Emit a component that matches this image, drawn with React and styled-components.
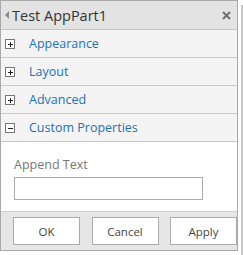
import React from "react";
import styled, { createGlobalStyle } from "styled-components";

const GlobalStyle = createGlobalStyle`
  body {
    margin: 0;
    background: #fff;
    font-family: "Open Sans", "Noto Sans", sans-serif;
  }
`;

const Page = styled.div`
  display: flex;
  width: 243px;
  height: 255px;
`;

const Panel = styled.div`
  width: 237px;
  height: 249px;
  border: 1px solid #a9a9a9;
  display: flex;
  flex-direction: column;
  background: #fff;
`;

const Scroll = styled.div`
  width: 2px;
  margin: 5px 0 0 3px;
  height: 250px;
  background: #c8c8c8;
`;

const Header = styled.div`
  height: 28px;
  display: flex;
  align-items: center;
  background: #e3e3e3;
  border-bottom: 1px solid #c6c6c6;
  padding: 0 6px 0 4px;
  color: #333;
  font-size: 14.5px;
`;

const Arrow = styled.span`
  width: 0;
  height: 0;
  border-top: 4px solid transparent;
  border-bottom: 4px solid transparent;
  border-right: 4px solid #8a8a8a;
  margin-right: 3px;
`;

const Title = styled.span`
  flex: 1;
`;

const Close = styled.svg`
  width: 9px;
  height: 9px;
`;

const Row = styled.div`
  height: 27px;
  display: flex;
  align-items: center;
  background: #f4f4f4;
  border-bottom: 1px solid #c9c9c9;
  padding-left: 4px;
  color: #1f70b5;
  font-size: 12.5px;
`;

const Toggle = styled.span`
  width: 8px;
  height: 8px;
  border: 1px solid #777;
  background: #fff;
  position: relative;
  margin-right: 14px;
  &::before {
    content: "";
    position: absolute;
    left: 2px;
    top: 4px;
    width: 5px;
    height: 1px;
    background: #222;
  }
  &::after {
    content: "";
    display: ${(p) => (p.open ? "none" : "block")};
    position: absolute;
    left: 4px;
    top: 2px;
    width: 1px;
    height: 5px;
    background: #222;
  }
`;

const Body = styled.div`
  flex: 1;
  padding: 14px 0 0 13px;
`;

const Label = styled.div`
  color: #777;
  font-size: 12.5px;
  line-height: 18px;
  margin-bottom: 3px;
`;

const Input = styled.input`
  box-sizing: border-box;
  width: 189px;
  height: 23px;
  border: 1px solid #ababab;
  padding: 0;
  margin: 0;
  display: block;
`;

const Footer = styled.div`
  height: 38px;
  background: #e6e6e6;
  border-top: 1px solid #d0d0d0;
  display: flex;
  align-items: center;
  justify-content: space-between;
  padding: 0 0 0 12px;
`;

const Button = styled.button`
  box-sizing: border-box;
  width: 67px;
  height: 28px;
  background: #fff;
  border: 1px solid #ababab;
  font-family: "Open Sans", "Noto Sans", sans-serif;
  font-size: 11.5px;
  color: #444;
  padding: 0;
`;

const sections = [
  { name: "Appearance" },
  { name: "Layout" },
  { name: "Advanced" },
  { name: "Custom Properties", open: true },
];

export default function App() {
  return (
    <Page>
      <GlobalStyle />
      <Panel>
        <Header>
          <Arrow />
          <Title>Test AppPart1</Title>
          <Close viewBox="0 0 9 9">
            <path d="M1 1L8 8M8 1L1 8" stroke="#707070" strokeWidth="2" />
          </Close>
        </Header>
        {sections.map((s) => (
          <Row key={s.name}>
            <Toggle open={s.open} />
            {s.name}
          </Row>
        ))}
        <Body>
          <Label>Append Text</Label>
          <Input />
        </Body>
        <Footer>
          <Button>OK</Button>
          <Button>Cancel</Button>
          <Button>Apply</Button>
        </Footer>
      </Panel>
      <Scroll />
    </Page>
  );
}
